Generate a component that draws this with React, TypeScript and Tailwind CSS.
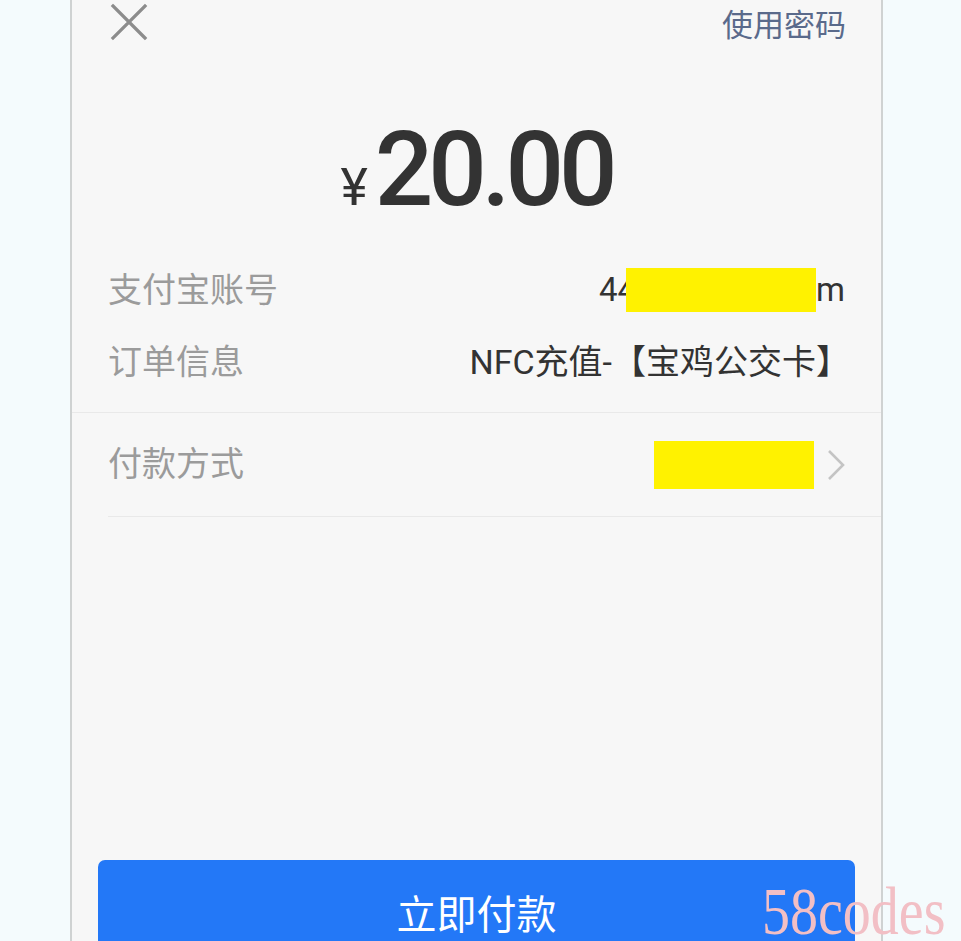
import React from 'react';

const font = { fontFamily: "Roboto, 'Noto Sans CJK SC', sans-serif" };

function CloseIcon() {
  return (
    <svg width="38" height="38" viewBox="0 0 38 38" fill="none">
      <path d="M3 3 L35 35 M35 3 L3 35" stroke="#8c8c8c" strokeWidth="3.2" strokeLinecap="square" />
    </svg>
  );
}

function Chevron() {
  return (
    <svg width="22" height="34" viewBox="0 0 22 34" fill="none">
      <path d="M4 3 L18 17 L4 31" stroke="#c4c4c4" strokeWidth="2.6" />
    </svg>
  );
}

export default function App() {
  return (
    <div className="relative h-[941px] w-full overflow-hidden bg-[#f4fbfd]" style={font}>
      <div className="ml-[70px] h-full w-[813px] border-x-2 border-[#cfd2d2] bg-[#f7f7f7]">
        {/* Header */}
        <div className="flex h-[44px] items-center justify-between pl-[38px] pr-[35px]">
          <CloseIcon />
          <span className="mt-[6px] text-[31px] leading-none text-[#5a6a8b]">使用密码</span>
        </div>

        {/* Amount */}
        <div className="flex h-[210px] items-center justify-center pt-[40px]">
          <div className="flex items-baseline text-[#333333]">
            <span className="mr-[7px] text-[52px] leading-none">¥</span>
            <span className="text-[103px] leading-none font-medium tracking-[-5px]">20.00</span>
          </div>
        </div>

        {/* Order info */}
        <div className="px-[36px]">
          <div className="flex h-[72px] items-center justify-between">
            <span className="text-[34px] text-[#9b9b9b]">支付宝账号</span>
            <span className="flex items-center text-[33px] text-[#333333]">
              44
              <span className="-ml-[10px] h-[44px] w-[190px] bg-[#fff200]" />
              m
            </span>
          </div>
          <div className="flex h-[72px] items-center justify-between">
            <span className="text-[34px] text-[#9b9b9b]">订单信息</span>
            <span className="-mr-[5px] text-[34px] text-[#333333]">NFC充值-【宝鸡公交卡】</span>
          </div>
        </div>

        <div className="mt-[14px] h-px bg-[#e9e9e9]" />

        {/* Payment method */}
        <div className="flex h-[103px] items-center justify-between pl-[36px] pr-[34px]">
          <span className="text-[34px] text-[#9b9b9b]">付款方式</span>
          <div className="flex items-center gap-[11px]">
            <span className="h-[48px] w-[160px] bg-[#fff200]" />
            <Chevron />
          </div>
        </div>
        <div className="ml-[36px] h-px bg-[#e9e9e9]" />

        {/* Pay button */}
        <div className="mt-[343px] px-[26px]">
          <button className="flex h-[112px] w-full items-center justify-center rounded-[7px] bg-[#2378f7] text-[40px] text-white">
            立即付款
          </button>
        </div>
      </div>

      {/* Watermark */}
      <span
        className="absolute left-[762px] top-[884px] origin-top scale-y-[1.22] text-[56px] leading-[0.8] text-[#f2bfc5]"
        style={{ fontFamily: "'Liberation Serif', serif" }}
      >
        58codes
      </span>
    </div>
  );
}
